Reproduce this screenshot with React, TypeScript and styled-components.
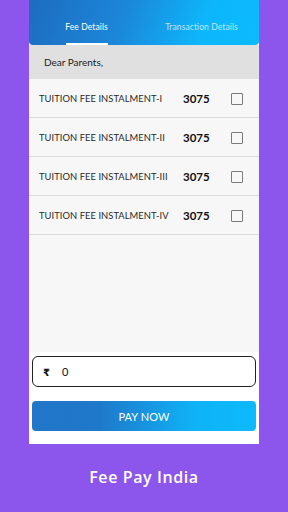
import React, { useState } from 'react';
import styled, { createGlobalStyle } from 'styled-components';

const GlobalStyle = createGlobalStyle`
  html, body {
    margin: 0;
    padding: 0;
    background: #8c55eb;
  }
  * {
    box-sizing: border-box;
  }
`;

const Page = styled.div`
  width: 288px;
  height: 512px;
  background: #8c55eb;
  display: flex;
  flex-direction: column;
  align-items: center;
  font-family: Lato, 'Noto Sans', sans-serif;
  overflow: hidden;
`;

const Screen = styled.div`
  width: 230px;
  height: 444px;
  background: #ffffff;
  display: flex;
  flex-direction: column;
`;

const Header = styled.div`
  height: 45px;
  display: flex;
  background: linear-gradient(110deg, #1d6cc0 0%, #1c86d8 40%, #0db6fb 75%, #0cbafd 100%);
  border-radius: 0 0 4px 4px;
`;

const Tab = styled.div<{ active?: boolean }>`
  flex: 1;
  display: flex;
  flex-direction: column;
  align-items: center;
  justify-content: flex-end;
  color: ${({ active }) => (active ? '#ffffff' : 'rgba(255,255,255,0.72)')};
  font-size: 8.5px;
  letter-spacing: 0.1px;
`;

const TabLabel = styled.span`
  padding-bottom: 11px;
`;

const Indicator = styled.div<{ active?: boolean }>`
  width: 42px;
  height: 2px;
  background: ${({ active }) => (active ? '#ffffff' : 'transparent')};
`;

const Notice = styled.div`
  height: 34px;
  background: #e0e0e0;
  display: flex;
  align-items: center;
  padding-left: 15px;
  font-size: 10px;
  color: #222;
`;

const List = styled.div`
  flex: 1;
  background: #f7f7f7;
  display: flex;
  flex-direction: column;
`;

const Row = styled.div`
  height: 39px;
  display: flex;
  align-items: center;
  border-bottom: 1px solid #dcdcdc;
  padding-left: 10px;
  padding-top: 1px;
`;

const Label = styled.span`
  width: 144px;
  font-size: 9.4px;
  color: #2a2a2a;
  letter-spacing: 0.05px;
`;

const Amount = styled.span`
  width: 48px;
  font-size: 11.5px;
  font-weight: 700;
  color: #111;
`;

const Box = styled.span<{ checked?: boolean }>`
  width: 12px;
  height: 12px;
  border: 1.5px solid #7a7a7a;
  border-radius: 1px;
  background: ${({ checked }) => (checked ? '#1c86d8' : 'transparent')};
  cursor: pointer;
`;

const Bottom = styled.div`
  padding: 4px 3px 13px 3px;
  display: flex;
  flex-direction: column;
  gap: 14px;
  background: #ffffff;
`;

const AmountInput = styled.div`
  height: 31px;
  border: 1px solid #222;
  border-radius: 6px;
  display: flex;
  align-items: center;
  padding-left: 10px;
  gap: 12px;
  font-size: 11px;
  color: #111;
`;

const Rupee = styled.span`
  font-family: 'DejaVu Sans', sans-serif;
  font-size: 10px;
  font-weight: 700;
  padding-top: 2px;
`;

const PayButton = styled.button`
  height: 30px;
  border: none;
  border-radius: 4px;
  background: linear-gradient(90deg, #2176c8 0%, #1f78ca 30%, #0fb2f6 72%, #0cbafd 100%);
  color: #ffffff;
  font-family: Lato, 'Noto Sans', sans-serif;
  font-size: 11px;
  letter-spacing: 0.1px;
`;

const Footer = styled.div`
  flex: 1;
  display: flex;
  align-items: center;
  justify-content: center;
  color: #ffffff;
  font-family: 'Open Sans', sans-serif;
  font-weight: 600;
  font-size: 16px;
  letter-spacing: 0.6px;
  padding-bottom: 2px;
`;

const fees = [
  'TUITION FEE INSTALMENT-I',
  'TUITION FEE INSTALMENT-II',
  'TUITION FEE INSTALMENT-III',
  'TUITION FEE INSTALMENT-IV',
];

function App(): JSX.Element {
  const [checked, setChecked] = useState<boolean[]>([false, false, false, false]);

  const toggle = (index: number) => {
    const list = [...checked];
    list[index] = !list[index];
    setChecked(list);
  };

  const total = checked.reduce((sum, c) => (c ? sum + 3075 : sum), 0);

  return (
    <Page>
      <GlobalStyle />
      <Screen>
        <Header>
          <Tab active>
            <TabLabel>Fee Details</TabLabel>
            <Indicator active />
          </Tab>
          <Tab>
            <TabLabel>Transaction Details</TabLabel>
            <Indicator />
          </Tab>
        </Header>
        <Notice>Dear Parents,</Notice>
        <List>
          {fees.map((fee, index) => (
            <Row key={fee}>
              <Label>{fee}</Label>
              <Amount>3075</Amount>
              <Box checked={checked[index]} onClick={() => toggle(index)} />
            </Row>
          ))}
        </List>
        <Bottom>
          <AmountInput>
            <Rupee>₹</Rupee>
            <span>{total}</span>
          </AmountInput>
          <PayButton>PAY NOW</PayButton>
        </Bottom>
      </Screen>
      <Footer>Fee Pay India</Footer>
    </Page>
  );
}

export default App;
